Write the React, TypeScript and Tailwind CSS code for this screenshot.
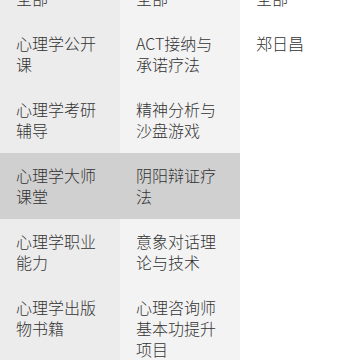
import React from 'react'

type Column = {
  items: string[]
  selected?: number
  bg: string
}

const columns: Column[] = [
  {
    bg: 'bg-[#ececec]',
    selected: 3,
    items: ['全部', '心理学公开课', '心理学考研辅导', '心理学大师课堂', '心理学职业能力', '心理学出版物书籍'],
  },
  {
    bg: 'bg-[#f3f3f3]',
    selected: 3,
    items: ['全部', 'ACT接纳与承诺疗法', '精神分析与沙盘游戏', '阴阳辩证疗法', '意象对话理论与技术', '心理咨询师基本功提升项目'],
  },
  {
    bg: 'bg-white',
    items: ['全部', '郑日昌'],
  },
]

export default function App() {
  return (
    <div
      className="w-[360px] h-[360px] overflow-hidden bg-white text-[#333333]"
      style={{ fontFamily: '"Noto Sans CJK SC", "Noto Sans", sans-serif' }}
    >
      {/* 列表已向下滚动 24px */}
      <div className="grid grid-cols-3 h-[400px] -mt-[24px]">
        {columns.map((col, ci) => (
          <ul key={ci} className={`flex flex-col ${col.bg}`}>
            {col.items.map((item, i) => (
              <li
                key={i}
                className={`px-4 py-3 text-[16px] leading-[21px] font-light break-all ${
                  col.selected === i ? 'bg-[#d0d0d0]' : ''
                }`}
              >
                {item}
              </li>
            ))}
          </ul>
        ))}
      </div>
    </div>
  )
}
